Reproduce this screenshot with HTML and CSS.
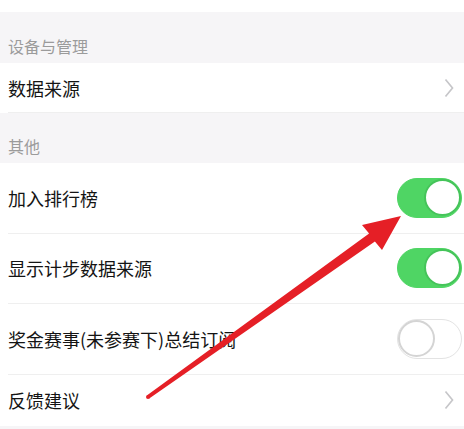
FILE: index.html
```html
<!DOCTYPE html>
<html lang="zh-CN">
<head>
<meta charset="utf-8">
<title>设置</title>
<link rel="stylesheet" href="styles.css">
</head>
<body>
<div class="page">
  <div class="top"></div>
  <div class="section-header first">设备与管理</div>
  <div class="group">
    <div class="row short">
      <span class="label">数据来源</span>
      <svg class="chevron" width="10" height="20" viewBox="0 0 10 20"><polyline points="1.5,1.5 8.5,10 1.5,18.5" fill="none" stroke="#c6c6c9" stroke-width="1.7"/></svg>
    </div>
  </div>
  <div class="section-header">其他</div>
  <div class="group">
    <div class="row tall">
      <span class="label">加入排行榜</span>
      <span class="switch on"><span class="knob"></span></span>
    </div>
    <div class="row tall">
      <span class="label">显示计步数据来源</span>
      <span class="switch on"><span class="knob"></span></span>
    </div>
    <div class="row tall">
      <span class="label">奖金赛事(未参赛下)总结订阅</span>
      <span class="switch"><span class="knob"></span></span>
    </div>
    <div class="row short last">
      <span class="label">反馈建议</span>
      <svg class="chevron" width="10" height="20" viewBox="0 0 10 20"><polyline points="1.5,1.5 8.5,10 1.5,18.5" fill="none" stroke="#c6c6c9" stroke-width="1.7"/></svg>
    </div>
  </div>
  <svg class="arrow" width="464" height="429" viewBox="0 0 464 429">
    <polygon points="146.8,395.4 369.1,233.4 362,225 401,216 382,250 374.9,241.6 149.2,398.6" fill="#e51f26"/>
    <circle cx="148" cy="397" r="2" fill="#e51f26"/>
  </svg>
</div>
</body>
</html>
```
FILE: styles.css
```css
html, body {
  margin: 0;
  padding: 0;
  background: #f6f5f7;
}
.page {
  position: relative;
  width: 464px;
  height: 429px;
  overflow: hidden;
  font-family: "Noto Sans CJK SC", "Noto Sans", sans-serif;
  background: #f6f5f7;
}
.top {
  height: 12px;
  background: #ffffff;
}
.section-header {
  height: 50px;
  box-sizing: border-box;
  padding-left: 8px;
  display: flex;
  align-items: center;
  padding-top: 15px;
  font-size: 16px;
  color: #9b9b9b;
}
.section-header.first {
  height: 51px;
  padding-top: 16px;
}
.group {
  background: #ffffff;
  padding-left: 8px;
}
.row {
  display: flex;
  align-items: center;
  justify-content: space-between;
  border-bottom: 1px solid #efefef;
  box-sizing: border-box;
  padding-right: 2px;
}
.row.last {
  border-bottom: none;
}
.row.short {
  height: 50px;
  padding-right: 10px;
}
.group .row.last {
  height: 51px;
}
.row.tall {
  height: 70.5px;
}
.label {
  font-size: 18px;
  color: #141414;
}
.chevron {
  display: block;
}
.switch {
  position: relative;
  width: 65px;
  height: 40px;
  box-sizing: border-box;
  border-radius: 20px;
  background: #ffffff;
  border: 1.5px solid #e3e3e3;
}
.switch .knob {
  position: absolute;
  top: 0;
  left: 0;
  width: 37px;
  height: 37px;
  box-sizing: border-box;
  border-radius: 50%;
  background: #ffffff;
  border: 2px solid #d4d4d4;
}
.switch.on {
  background: #4fd564;
  border-color: #4fd564;
}
.switch.on .knob {
  left: auto;
  right: 0;
  border-color: #45c45a;
}
.arrow {
  position: absolute;
  left: 0;
  top: 0;
  pointer-events: none;
}
```
